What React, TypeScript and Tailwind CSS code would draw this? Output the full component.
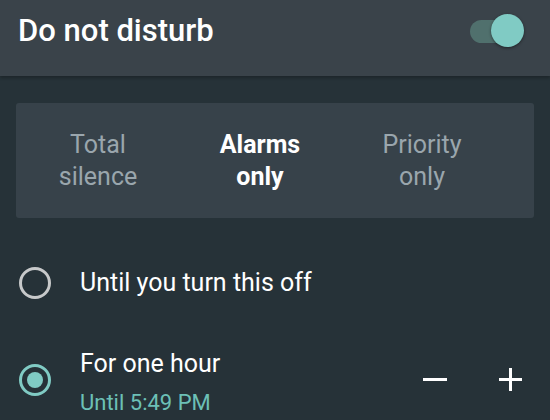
export default function App() {
  return (
    <div
      className="w-[550px] h-[420px] overflow-hidden bg-[#263238] text-white"
      style={{ fontFamily: "Roboto, 'Liberation Sans', sans-serif" }}
    >
      {/* Header */}
      <div className="h-[76px] bg-[#3a434a] flex items-start justify-between pl-[18px] pr-[26px] pt-[12px] shadow-[0_2px_3px_rgba(0,0,0,0.25)]">
        <span className="text-[31px] leading-[38px] font-medium">Do not disturb</span>
        <div className="relative w-[54px] h-[34px] mt-[2px]">
          <div className="absolute left-0 top-[6px] w-[40px] h-[23px] rounded-full bg-[#50706d]" />
          <div className="absolute right-0 top-0 w-[33px] h-[33px] rounded-full bg-[#80cbc4] shadow-[0_1px_3px_rgba(0,0,0,0.45)]" />
        </div>
      </div>

      {/* Mode selector */}
      <div className="mx-[16px] mt-[27px] h-[115px] rounded-[3px] bg-[#37424a] grid grid-cols-[162px_162px_162px] pl-[1px] items-center text-[25px] leading-[32px] text-center">
        <div className="text-[#9aa6ad]">Total<br />silence</div>
        <div className="font-bold">Alarms<br />only</div>
        <div className="text-[#9aa6ad]">Priority<br />only</div>
      </div>

      {/* Options */}
      <div className="mt-[49px] flex items-center pl-[19px]">
        <div className="w-[32px] h-[32px] rounded-full border-[3px] border-[#c7c9ca]" />
        <span className="ml-[29px] text-[25px] leading-[30px]">Until you turn this off</span>
      </div>

      <div className="mt-[50px] flex items-start pl-[19px] pr-[28px]">
        <div className="mt-[15px] w-[32px] h-[32px] rounded-full border-[3px] border-[#80cbc4] flex items-center justify-center">
          <div className="w-[16px] h-[16px] rounded-full bg-[#80cbc4]" />
        </div>
        <div className="ml-[29px] flex flex-col">
          <span className="text-[25px] leading-[30px]">For one hour</span>
          <span className="text-[22px] leading-[26px] mt-[11px] text-[#6cc0b6]">Until 5:49 PM</span>
        </div>
        <div className="ml-auto mt-[19px] flex items-center gap-[52px]">
          <div className="w-[24px] h-[3px] bg-white" />
          <div className="relative w-[23px] h-[23px]">
            <div className="absolute left-0 top-[10px] w-[23px] h-[3px] bg-white" />
            <div className="absolute left-[10px] top-0 w-[3px] h-[23px] bg-white" />
          </div>
        </div>
      </div>
    </div>
  );
}
